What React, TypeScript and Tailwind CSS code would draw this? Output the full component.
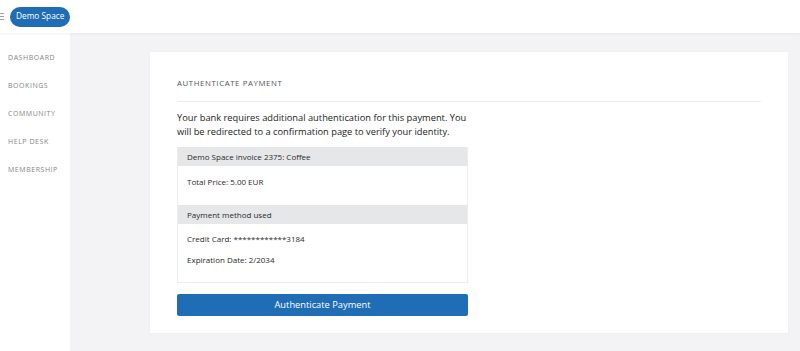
import React from "react";

export default function App() {
  const nav = ["DASHBOARD", "BOOKINGS", "COMMUNITY", "HELP DESK", "MEMBERSHIP"];
  return (
    <div
      className="w-[800px] h-[351px] overflow-hidden flex flex-col bg-[#f3f3f5]"
      style={{ fontFamily: '"Open Sans", sans-serif' }}
    >
      <header className="h-[33px] shrink-0 bg-white flex items-center relative z-10 shadow-[0_1px_3px_rgba(0,0,0,0.06)]">
        <div className="w-[10px] flex flex-col gap-[2px] items-start">
          <span className="block w-[4px] h-[1px] bg-[#9aa0a6]" />
          <span className="block w-[4px] h-[1px] bg-[#9aa0a6]" />
          <span className="block w-[4px] h-[1px] bg-[#9aa0a6]" />
        </div>
        <div className="h-[20px] px-[6px] rounded-full bg-[#1e6db5] text-white text-[8.3px] flex items-center leading-none">
          Demo Space
        </div>
      </header>
      <div className="flex flex-1 min-h-0">
        <aside className="w-[70px] shrink-0 bg-white pt-[19px] pl-[8px] flex flex-col gap-[17px]">
          {nav.map((n) => (
            <div key={n} className="text-[7px] leading-[11px] tracking-[0.55px] text-[#858585]">
              {n}
            </div>
          ))}
        </aside>
        <main className="flex-1 pt-[19px] pl-[80px] pr-[12px]">
          <div className="bg-white h-[281px] shadow-[0_0_2px_rgba(0,0,0,0.04)] pt-[26px] px-[27px]">
            <div className="text-[7.8px] leading-[10px] tracking-[0.6px] text-[#555] pb-[13px] border-b border-[#ececec]">
              AUTHENTICATE PAYMENT
            </div>
            <div className="w-[291px]">
              <p className="mt-[9px] w-[300px] text-[9.3px] leading-[14px] text-[#222]">
                Your bank requires additional authentication for this payment. You will be redirected to a
                confirmation page to verify your identity.
              </p>
              <div className="mt-[8px] border border-[#ececec] border-t-0 text-[8px] text-[#2a2a2a]">
                <div className="h-[19px] bg-[#e6e7e9] flex items-center px-[9px]">
                  Demo Space invoice 2375: Coffee
                </div>
                <div className="px-[9px] pt-[10px] pb-[17px]">Total Price: 5.00 EUR</div>
                <div className="h-[19px] bg-[#e6e7e9] flex items-center px-[9px]">Payment method used</div>
                <div className="px-[9px] pt-[9px] pb-[16px] flex flex-col gap-[9px]">
                  <div>Credit Card: ************3184</div>
                  <div>Expiration Date: 2/2034</div>
                </div>
              </div>
              <button className="mt-[11px] w-full h-[22px] rounded-[2px] bg-[#1e6db5] text-white text-[9.3px] flex items-center justify-center">
                Authenticate Payment
              </button>
            </div>
          </div>
        </main>
      </div>
    </div>
  );
}
